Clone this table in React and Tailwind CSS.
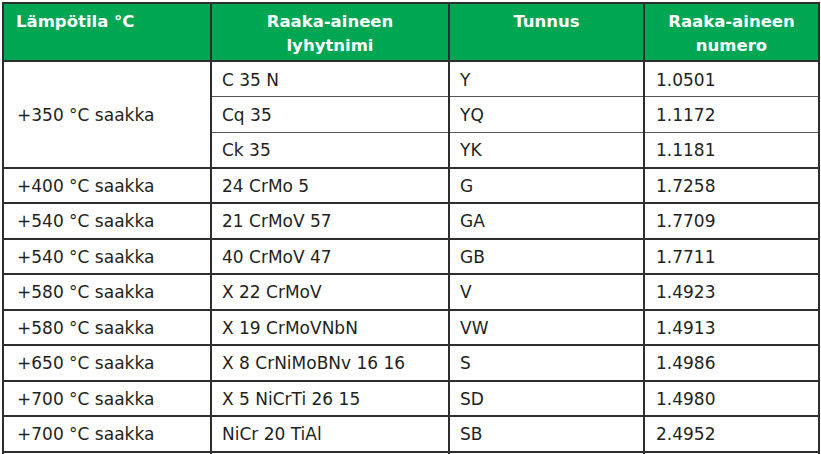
import React from "react";

const rows = [
  ["+400 °C saakka", "24 CrMo 5", "G", "1.7258"],
  ["+540 °C saakka", "21 CrMoV 57", "GA", "1.7709"],
  ["+540 °C saakka", "40 CrMoV 47", "GB", "1.7711"],
  ["+580 °C saakka", "X 22 CrMoV", "V", "1.4923"],
  ["+580 °C saakka", "X 19 CrMoVNbN", "VW", "1.4913"],
  ["+650 °C saakka", "X 8 CrNiMoBNv 16 16", "S", "1.4986"],
  ["+700 °C saakka", "X 5 NiCrTi 26 15", "SD", "1.4980"],
  ["+700 °C saakka", "NiCr 20 TiAl", "SB", "2.4952"],
];

const first = [
  ["C 35 N", "Y", "1.0501"],
  ["Cq 35", "YQ", "1.1172"],
  ["Ck 35", "YK", "1.1181"],
];

export default function App() {
  const td = "border-2 border-[#2e2e2e] h-[35.5px] align-middle leading-none pt-[2px]";
  return (
    <div
      className="w-[821px] h-[454px] overflow-hidden bg-white pl-[2px] pt-[2px]"
      style={{ fontFamily: "'DejaVu Sans', 'Liberation Sans', sans-serif" }}
    >
      <table className="table-fixed border-collapse w-[816px] text-[17px] text-[#231f20]">
        <colgroup>
          <col className="w-[208px]" />
          <col className="w-[238px]" />
          <col className="w-[195px]" />
          <col className="w-[175px]" />
        </colgroup>
        <thead>
          <tr className="bg-[#00a651] text-white font-bold text-[16.5px] leading-[24px]">
            <th className="border-2 border-[#2e2e2e] h-[58px] align-top text-left pl-[12px] pt-[6px] font-bold">
              Lämpötila °C
            </th>
            <th className="border-2 border-[#2e2e2e] align-top text-center pt-[6px] font-bold">
              Raaka-aineen
              <br />
              lyhytnimi
            </th>
            <th className="border-2 border-[#2e2e2e] align-top text-center pt-[6px] font-bold">
              Tunnus
            </th>
            <th className="border-2 border-[#2e2e2e] align-top text-center pt-[6px] font-bold">
              Raaka-aineen
              <br />
              numero
            </th>
          </tr>
        </thead>
        <tbody>
          {first.map((r, i) => (
            <tr key={i}>
              {i === 0 && (
                <td rowSpan={3} className={`${td} pl-[13px]`}>
                  +350 °C saakka
                </td>
              )}
              <td className={`${td} pl-[10px] ${i > 0 ? "border-t-[1.5px] border-t-[#555]" : ""} ${i < 2 ? "border-b-[1.5px] border-b-[#555]" : ""}`}>
                {r[0]}
              </td>
              <td className={`${td} pl-[10px] ${i > 0 ? "border-t-[1.5px] border-t-[#555]" : ""} ${i < 2 ? "border-b-[1.5px] border-b-[#555]" : ""}`}>
                {r[1]}
              </td>
              <td className={`${td} pl-[11px] ${i > 0 ? "border-t-[1.5px] border-t-[#555]" : ""} ${i < 2 ? "border-b-[1.5px] border-b-[#555]" : ""}`}>
                {r[2]}
              </td>
            </tr>
          ))}
          {rows.map((r, i) => (
            <tr key={"r" + i}>
              <td className={`${td} pl-[13px]`}>{r[0]}</td>
              <td className={`${td} pl-[10px]`}>{r[1]}</td>
              <td className={`${td} pl-[10px]`}>{r[2]}</td>
              <td className={`${td} pl-[11px]`}>{r[3]}</td>
            </tr>
          ))}
          <tr>
            <td className={td}>&nbsp;</td>
            <td className={td}>&nbsp;</td>
            <td className={td}>&nbsp;</td>
            <td className={td}>&nbsp;</td>
          </tr>
        </tbody>
      </table>
    </div>
  );
}
